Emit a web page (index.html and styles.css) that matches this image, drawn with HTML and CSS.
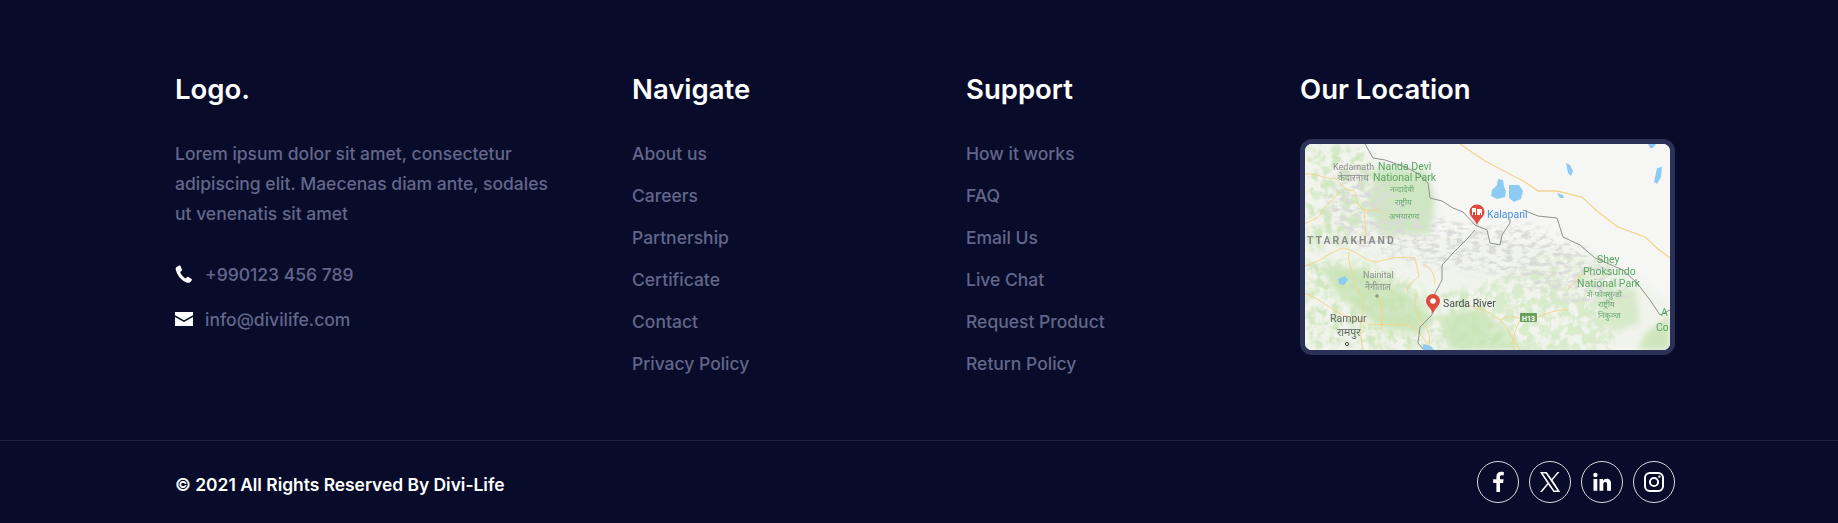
FILE: index.html
```html
<!DOCTYPE html>
<html>
<head>
    <title>Footer</title>
    <link rel="stylesheet" href="styles.css">
</head>
<body>
    <footer class="footer">
        <div class="footer-top">
            <div class="footer-grid">
                <div class="col">
                    <h3>Logo.</h3>
                    <p class="about">Lorem ipsum dolor sit amet, consectetur adipiscing elit. Maecenas diam ante, sodales ut venenatis sit amet</p>
                    <div class="contact">
                        <svg class="contact-icon" viewBox="0 0 18 18"><path fill="#fff" d="M4.2.6 1.6 1.9C.6 2.6.4 3.6.9 5.2c1 3.4 2.8 6.5 5.2 8.9 1.5 1.5 3.4 2.8 5.6 3.5 1.5.5 2.8.3 3.7-.6l1.3-1.6c.4-.6.3-1.1-.2-1.5l-3-2c-.5-.3-1-.3-1.4.1l-1 1.1c-.3.3-.7.3-1.1.1-2-1.2-3.7-3.2-4.6-5.4-.2-.4-.1-.8.2-1.1l1-.9c.4-.4.5-.9.3-1.4L5.5 1c-.3-.5-.8-.6-1.3-.4z"/></svg>
                        <span>+990123 456 789</span>
                    </div>
                    <div class="contact">
                        <svg class="contact-icon" viewBox="0 0 18 14"><path fill="#fff" d="M0 0h18v3.2L9 8.2 0 3.2zM0 5l9 5 9-5v9H0z"/></svg>
                        <span>info@divilife.com</span>
                    </div>
                </div>
                <div class="col">
                    <h3>Navigate</h3>
                    <ul class="links">
                        <li>About us</li>
                        <li>Careers</li>
                        <li>Partnership</li>
                        <li>Certificate</li>
                        <li>Contact</li>
                        <li>Privacy Policy</li>
                    </ul>
                </div>
                <div class="col">
                    <h3>Support</h3>
                    <ul class="links">
                        <li>How it works</li>
                        <li>FAQ</li>
                        <li>Email Us</li>
                        <li>Live Chat</li>
                        <li>Request Product</li>
                        <li>Return Policy</li>
                    </ul>
                </div>
                <div class="col">
                    <h3>Our Location</h3>
                    <div class="map">
                        <svg viewBox="0 0 365 206" width="365" height="206">
                            <defs>
                                <filter id="mottle" x="0" y="0" width="100%" height="100%">
                                    <feGaussianBlur in="SourceGraphic" stdDeviation="5" result="shape"/>
                                    <feTurbulence type="fractalNoise" baseFrequency="0.11" numOctaves="3" seed="4"/>
                                    <feColorMatrix type="matrix" values="0 0 0 0 0  0 0 0 0 0  0 0 0 0 0  3.5 0 0 0 -1.4"/>
                                    <feComposite in="shape" operator="in"/>
                                    <feGaussianBlur stdDeviation="0.6"/>
                                </filter>
                                <filter id="ridge" x="0" y="0" width="100%" height="100%">
                                    <feGaussianBlur in="SourceGraphic" stdDeviation="5" result="shape"/>
                                    <feTurbulence type="fractalNoise" baseFrequency="0.12 0.22" numOctaves="3" seed="11"/>
                                    <feColorMatrix type="matrix" values="0 0 0 0 0  0 0 0 0 0  0 0 0 0 0  4 0 0 0 -1.8"/>
                                    <feComposite in="shape" operator="in"/>
                                    <feGaussianBlur stdDeviation="0.5"/>
                                </filter>
                                <filter id="soft"><feGaussianBlur stdDeviation="3"/></filter>
                                <filter id="lines"><feGaussianBlur stdDeviation="0.35"/></filter>
                            </defs>
                            <rect width="365" height="206" fill="#f6f6f5"/>
                            <g filter="url(#soft)">
                                <path fill="#f1f4ec" d="M0 0h56l16 24 10 30-10 34-30 14-42 6zM0 108l170-20 110 20 60 30 25 20v48H0z"/>
                                <path fill="#cfe6c2" d="M72 22l50 4 8 30-4 34-50 2-14-30z"/>
                                <path fill="#d6e9c8" d="M295 145l36 0 4 34-28 10-14-20z"/>
                                <path fill="#c9e4b6" d="M14 122l40 2 50 26 24 24-12 16-40-6-40-30z"/>
                                <path fill="#cde5bc" d="M340 190l25-20v36h-32z"/>
                                <path fill="#cbe5ba" d="M135 172l40-8 35 30 5 12h-70z"/>
                            </g>
                            <path filter="url(#mottle)" fill="#d0e7c1" d="M0 0h56l16 24 10 30-10 34-30 14-42 6zM0 115h60l60 30 20 61H0zM130 150l60-10 60 0 50 20 10 46H130z"/>
                            <path filter="url(#mottle)" fill="#d8ebcb" d="M180 140l60-30 70 10 20 40-30 46H180z"/>
                            <path filter="url(#ridge)" fill="#dadad8" d="M40 20h20l50 50 60 10 60 0 60 30 40 50-60 0-80-30-80-10-70-20-20-40z"/>
                            <g fill="none" stroke="#f3d48c" stroke-width="1" filter="url(#lines)">
                                <path stroke-width="1.3" d="M155 0l25 17 40 21 13 9h19l25 6 16 15 20 15 27 10 13 12 12 9"/>
                                <path d="M0 30c10-2 20 6 30 4 8 6 10 14 18 12 6 6 2 16 12 20 8 2 14-4 18 4M35 46c-4 10-14 12-18 22-4 8-12 8-17 12M60 66c-2 12 4 20-2 34"/>
                                <path d="M0 122c14-4 26-14 38-18 14 2 22 14 34 14 12-4 26-6 38-4l4 18c-4 6-12 6-12 16M44 108c-2 12 4 18 6 30 2 10 10 16 8 28-2 10-4 24 0 40M0 150c10 2 22 12 32 18 12 6 22 6 30 12 14 2 30-2 44 2 8 4 14 14 20 24M74 152c4 12 4 22 2 34M112 150c-4 8-2 22 6 30 8 8 8 16 4 26M118 120c8 4 12 10 12 20"/>
                                <path d="M165 162c12 2 22 8 30 14 6 4 10 16 20 30M195 176c10-6 18-2 26 0 14-2 28-12 42-10M215 176c-4 8-8 16-6 30M278 130c-6 4-10 12-16 16"/>
                            </g>
                            <g fill="none" stroke="#8d918f" stroke-width="1" filter="url(#lines)">
                                <path d="M60 0l8 14 12 2 20 7 12 6 11 10 2 15 12 3 11 7 10 4 12 13"/>
                                <path d="M170 86l-8 9-14 14-11 12v15l-9 17-1 18-12 12-2 16 6 7"/>
                                <path d="M170 81l12 5 3 13 10 2 2-10 8-12v-4M218 66l15 6 19 2 6 19 17 8 15 13 28 12 14 13 13 17 10 15 10-5"/>
                            </g>
                            <path fill="#8ecbf3" d="M193 35l5 1 1 7 2 4-1 6-8 2-6-3 1-6 5-5zM204 41l10 0 4 6-2 8-7 3-5-4zM261 19l4 2 3 6-2 5-3-3zM352 24l5-1-1 10-4 7-3-2zM343 0h8l-3 4h-3zM252 49l6 2 1 3h-4zM33 135l7-3 3 4-4 5-5-1zM118 200l8 2 3 4h-11z"/>
                            <g class="map-text" filter="url(#lines)">
                                <text x="28" y="26" class="map-small">Kedarnath</text>
                                <text x="33" y="37" class="map-small">केदारनाथ</text>
                                <text x="73" y="26" class="map-park">Nanda Devi</text>
                                <text x="68" y="37" class="map-park">National Park</text>
                                <text x="85" y="48" class="map-hindi">नन्दादेवी</text>
                                <text x="90" y="61" class="map-hindi">राष्ट्रीय</text>
                                <text x="84" y="75" class="map-hindi">अभयारण्य</text>
                                <text x="2" y="100" class="map-region">TTARAKHAND</text>
                                <text x="58" y="134" class="map-small">Nainital</text>
                                <text x="60" y="146" class="map-small">नैनीताल</text>
                                <text x="25" y="178" class="map-town">Rampur</text>
                                <text x="32" y="192" class="map-town">रामपुर</text>
                                <text x="138" y="163" class="map-label">Sarda River</text>
                                <text x="182" y="74" class="map-blue">Kalapani</text>
                                <text x="292" y="119" class="map-park">Shey</text>
                                <text x="278" y="131" class="map-park">Phoksundo</text>
                                <text x="272" y="143" class="map-park">National Park</text>
                                <text x="282" y="153" class="map-hindi">शे-फोक्सुन्डो</text>
                                <text x="293" y="163" class="map-hindi">राष्ट्रीय</text>
                                <text x="293" y="174" class="map-hindi">निकुञ्ज</text>
                                <text x="356" y="172" class="map-park">A</text>
                                <text x="351" y="187" class="map-park">Co</text>
                            </g>
                            <circle cx="72" cy="152" r="1.2" fill="none" stroke="#777"/>
                            <circle cx="42" cy="200" r="1.6" fill="none" stroke="#444"/>
                            <rect x="215" y="169" width="17" height="9" rx="1" fill="#6a9e5c"/>
                            <text x="217" y="176.5" class="map-shield">H13</text>
                            <path fill="#dd4b3e" d="M172 60.500c-4.200 0-7.500 3.300-7.500 7.500 0 5 5.500 7 7.500 13 2-6 7.500-8 7.500-13 0-4.200-3.300-7.500-7.500-7.500z"/>
                            <path fill="#fff" d="M167 64h4v7h-1v-3h-2v3h-1zM172 65h5v6h-1v-2h-1v2h-3z"/>
                            <path fill="#dd4b3e" d="M128 150c-3.900 0-7 3.100-7 7 0 5 5.500 7 7 13 1.500-6 7-8 7-13 0-3.900-3.100-7-7-7z"/>
                            <circle cx="128" cy="157" r="2.8" fill="#fff"/>
                        </svg>
                    </div>
                </div>
            </div>
        </div>
        <div class="footer-bottom">
            <span class="copyright">© 2021 All Rights Reserved By Divi-Life</span>
            <div class="social">
                <a class="social-btn"><svg viewBox="0 0 24 24" width="24" height="24"><path fill="#fff" d="M14 22v-9h3.100l.5-3.700H14V7c0-1.100.3-1.800 1.800-1.800h2V1.900c-.4-.1-1.400-.2-2.600-.2-2.800 0-4.800 1.700-4.800 4.900v2.700H7.200V13h3.200v9z"/></svg></a>
                <a class="social-btn"><svg viewBox="0 0 24 24" width="24" height="24"><path fill="#fff" fill-rule="evenodd" d="M2 2h6.700l5 6.900L19.500 2h2L14.600 10l7.600 12h-6.700l-5.300-7.400L4 22H2l7.300-8.700zm2.800 1.400 11.500 17.200h3L7.800 3.400z"/></svg></a>
                <a class="social-btn"><svg viewBox="0 0 24 24" width="24" height="24"><path fill="#fff" d="M3.500 9h3.800v11.800H3.500zM5.400 2.800a2.200 2.200 0 1 1 0 4.400 2.200 2.200 0 0 1 0-4.400zM9.500 9h3.600v1.700c.7-1.200 2-2 3.700-2 3.300 0 4.200 2.100 4.200 5.200v6.900h-3.900v-6.100c0-1.600-.4-2.700-1.800-2.700-1.600 0-2 1.100-2 2.800v6H9.500z"/></svg></a>
                <a class="social-btn"><svg viewBox="0 0 24 24" width="24" height="24"><path fill="#fff" fill-rule="evenodd" d="M7.800 2h8.400A5.800 5.800 0 0 1 22 7.800v8.400a5.800 5.800 0 0 1-5.800 5.800H7.800A5.800 5.800 0 0 1 2 16.200V7.800A5.800 5.800 0 0 1 7.800 2zm0 2A3.800 3.800 0 0 0 4 7.800v8.400A3.800 3.800 0 0 0 7.800 20h8.400a3.800 3.800 0 0 0 3.800-3.800V7.800A3.800 3.800 0 0 0 16.200 4zM12 6.900a5.100 5.100 0 1 1 0 10.200 5.100 5.100 0 0 1 0-10.200zm0 2a3.100 3.100 0 1 0 0 6.200 3.100 3.100 0 0 0 0-6.200zm5.400-3.500a1.200 1.200 0 1 1 0 2.400 1.200 1.200 0 0 1 0-2.400z"/></svg></a>
            </div>
        </div>
    </footer>
</body>
</html>
```

FILE: styles.css
```css
* {
    box-sizing: border-box;
}
body {
    margin: 0;
    background-color: #080c2a;
    font-family: Inter, Roboto, sans-serif;
}
.footer {
    height: 523px;
    overflow: hidden;
}
.footer-top {
    height: 441px;
    padding: 71px 163px 0 175px;
    border-bottom: 1px solid #1f2342;
}
.footer-grid {
    display: grid;
    grid-template-columns: 457px 334px 334px 375px;
}
h3 {
    margin: 0 0 32px;
    color: #fff;
    font-size: 27.5px;
    font-weight: 600;
    line-height: 36px;
}
.about {
    margin: 0 0 30px;
    width: 378px;
    color: #63668a;
    font-size: 17.5px;
    font-weight: 500;
    line-height: 30px;
}
.contact {
    display: flex;
    align-items: center;
    height: 30px;
    margin-bottom: 15px;
    color: #63668a;
    font-size: 17.5px;
    font-weight: 500;
}
.contact-icon {
    width: 18px;
    margin-right: 12px;
}
.links {
    margin: 0;
    padding: 0;
    list-style: none;
}
.links li {
    height: 42px;
    color: #63668a;
    font-size: 17.5px;
    font-weight: 500;
    line-height: 30px;
}
.map {
    width: 375px;
    height: 216px;
    border: 5px solid #2b3157;
    border-radius: 12px;
    overflow: hidden;
    background-color: #f6f6f5;
}
.map svg {
    display: block;
}
.map-text {
    font-family: Roboto, "Noto Sans", sans-serif;
}
.map-small {
    font-size: 9px;
    fill: #8a8e8c;
}
.map-park {
    font-size: 10.5px;
    fill: #5aa563;
}
.map-hindi {
    font-size: 8px;
    fill: #6aa872;
}
.map-region {
    font-size: 10.5px;
    font-weight: 700;
    letter-spacing: 2px;
    fill: #8b8d8d;
}
.map-town {
    font-size: 10.5px;
    fill: #666a68;
}
.map-label {
    font-size: 10.5px;
    fill: #4a4d4c;
}
.map-blue {
    font-size: 10.5px;
    fill: #4a90d9;
}
.map-shield {
    font-family: Roboto, sans-serif;
    font-size: 7px;
    font-weight: 700;
    fill: #fff;
}
.footer-bottom {
    display: flex;
    align-items: center;
    justify-content: space-between;
    height: 82px;
    padding: 8px 163px 8px 175px;
}
.copyright {
    margin-top: 5px;
    color: #fff;
    font-size: 17.4px;
    font-weight: 600;
}
.social {
    display: flex;
    gap: 10px;
}
.social-btn {
    display: flex;
    align-items: center;
    justify-content: center;
    width: 42px;
    height: 42px;
    border: 1px solid #d8d8de;
    border-radius: 50%;
}
```
